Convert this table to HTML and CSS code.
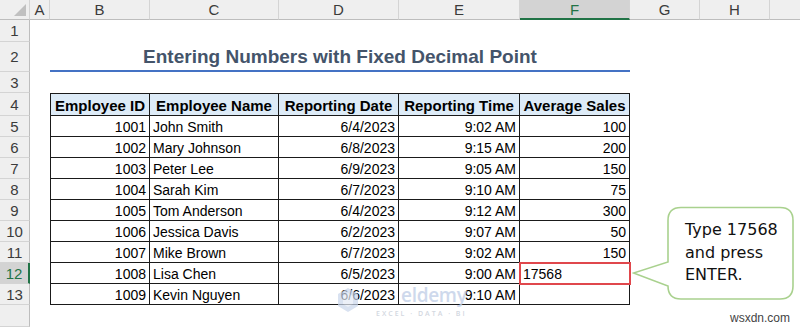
FILE: index.html
```html
<!DOCTYPE html>
<html>
<head>
<meta charset="utf-8">
<link rel="stylesheet" href="styles.css">
</head>
<body>
<div class="sheet">
  <div class="colhead corner"><span class="tri"></span></div>
  <div class="colhead">A</div>
  <div class="colhead">B</div>
  <div class="colhead">C</div>
  <div class="colhead">D</div>
  <div class="colhead">E</div>
  <div class="colhead selcol">F</div>
  <div class="colhead">G</div>
  <div class="colhead">H</div>
  <div class="colhead last"></div>

  <div class="rowhead">1</div><div class="blank span9"></div>

  <div class="rowhead">2</div><div class="blank"></div>
  <div class="title">Entering Numbers with Fixed Decimal Point</div>
  <div class="blank span3"></div>

  <div class="rowhead">3</div><div class="blank span9"></div>

  <div class="rowhead">4</div><div class="blank"></div>
  <div class="cell th first">Employee ID</div>
  <div class="cell th">Employee Name</div>
  <div class="cell th">Reporting Date</div>
  <div class="cell th">Reporting Time</div>
  <div class="cell th">Average Sales</div>
  <div class="blank span3"></div>

  <div class="rowhead">5</div><div class="blank"></div>
  <div class="cell first num">1001</div><div class="cell">John Smith</div><div class="cell num">6/4/2023</div><div class="cell num">9:02 AM</div><div class="cell num">100</div>
  <div class="blank span3"></div>

  <div class="rowhead">6</div><div class="blank"></div>
  <div class="cell first num">1002</div><div class="cell">Mary Johnson</div><div class="cell num">6/8/2023</div><div class="cell num">9:15 AM</div><div class="cell num">200</div>
  <div class="blank span3"></div>

  <div class="rowhead">7</div><div class="blank"></div>
  <div class="cell first num">1003</div><div class="cell">Peter Lee</div><div class="cell num">6/9/2023</div><div class="cell num">9:05 AM</div><div class="cell num">150</div>
  <div class="blank span3"></div>

  <div class="rowhead">8</div><div class="blank"></div>
  <div class="cell first num">1004</div><div class="cell">Sarah Kim</div><div class="cell num">6/7/2023</div><div class="cell num">9:10 AM</div><div class="cell num">75</div>
  <div class="blank span3"></div>

  <div class="rowhead">9</div><div class="blank"></div>
  <div class="cell first num">1005</div><div class="cell">Tom Anderson</div><div class="cell num">6/4/2023</div><div class="cell num">9:12 AM</div><div class="cell num">300</div>
  <div class="blank span3"></div>

  <div class="rowhead">10</div><div class="blank"></div>
  <div class="cell first num">1006</div><div class="cell">Jessica Davis</div><div class="cell num">6/2/2023</div><div class="cell num">9:07 AM</div><div class="cell num">50</div>
  <div class="blank span3"></div>

  <div class="rowhead">11</div><div class="blank"></div>
  <div class="cell first num">1007</div><div class="cell">Mike Brown</div><div class="cell num">6/7/2023</div><div class="cell num">9:02 AM</div><div class="cell num">150</div>
  <div class="blank span3"></div>

  <div class="rowhead selrow">12</div><div class="blank"></div>
  <div class="cell first num">1008</div><div class="cell">Lisa Chen</div><div class="cell num">6/5/2023</div><div class="cell num">9:00 AM</div><div class="cell active">17568</div>
  <div class="blank span3"></div>

  <div class="rowhead">13</div><div class="blank"></div>
  <div class="cell first num">1009</div><div class="cell">Kevin Nguyen</div><div class="cell num">6/6/2023</div><div class="cell num">9:10 AM</div><div class="cell num"></div>
  <div class="blank span3"></div>

  <div class="rowhead"></div><div class="blank span9"></div>

  <svg class="wm-hex" width="22" height="26" viewBox="0 0 22 26">
    <polygon points="11,1 21,7 21,19 11,25 1,19 1,7" fill="#c9d6ec"/>
    <polygon points="11,6 16,9 16,17 11,20 6,17 6,9" fill="#e4ebf6"/>
  </svg>
  <div class="wm-name">eldemy</div>
  <div class="wm-sub">EXCEL · DATA · BI</div>

  <div class="callout">
    <svg class="callout-shape" width="164" height="96" viewBox="0 0 164 96">
      <path d="M49 1.5 H148 Q161 1.5 161 14.5 V80 Q161 93 148 93 H49 Q36 93 36 80 L1.5 67 L36 56 V14.5 Q36 1.5 49 1.5 Z" fill="#ffffff" stroke="#a9d18e" stroke-width="1.6"/>
    </svg>
    <div class="callout-text">Type 17568<br>and press<br>ENTER.</div>
  </div>

  <div class="credit">wsxdn.com</div>
</div>
</body>
</html>
```

FILE: styles.css
```css
html, body {
  margin: 0;
  padding: 0;
  background: #ffffff;
}

.sheet {
  position: relative;
  width: 800px;
  height: 327px;
  overflow: hidden;
  display: grid;
  grid-template-columns: 30px 20px 100px 129px 120px 121px 110px 70px 70px 30px;
  grid-template-rows: 20px 22px 30px 21px 23px repeat(9, 21px) 22px;
  font-family: "Liberation Sans", Arial, sans-serif;
  font-size: 14px;
  color: #000;
}

.colhead {
  box-sizing: border-box;
  background: #efefef;
  border-right: 1px solid #d4d4d4;
  border-bottom: 1px solid #bdbdbd;
  display: flex;
  align-items: center;
  justify-content: center;
  font-size: 15px;
  color: #3b3b3b;
}

.colhead.corner {
  position: relative;
}

.tri {
  position: absolute;
  right: 3px;
  bottom: 3px;
  width: 0;
  height: 0;
  border-left: 12px solid transparent;
  border-bottom: 12px solid #c0c0c0;
}

.colhead.selcol {
  background: #d3d3d3;
  color: #217346;
  border-bottom: 2px solid #217346;
}

.colhead.last {
  border-right: none;
}

.rowhead {
  box-sizing: border-box;
  background: #efefef;
  border-right: 1px solid #bdbdbd;
  border-bottom: 1px solid #d4d4d4;
  display: flex;
  align-items: center;
  justify-content: center;
  font-size: 15px;
  color: #3b3b3b;
}

.rowhead.selrow {
  background: #d3d3d3;
  color: #217346;
  border-right: 2px solid #217346;
}

.blank {
  min-width: 0;
}

.span9 { grid-column: span 9; }
.span3 { grid-column: span 3; }

.title {
  grid-column: span 5;
  box-sizing: border-box;
  border-bottom: 2px solid #4472c4;
  display: flex;
  align-items: flex-end;
  justify-content: center;
  padding-bottom: 2px;
  font-weight: bold;
  font-size: 19px;
  color: #44546a;
  white-space: nowrap;
}

.cell {
  box-sizing: border-box;
  border-right: 1px solid #1a1a1a;
  border-bottom: 1px solid #1a1a1a;
  display: flex;
  align-items: center;
  padding: 1px 3px 0 3px;
  white-space: nowrap;
  overflow: visible;
  font-size: 14px;
}

.cell.first {
  border-left: 1px solid #1a1a1a;
}

.cell.th {
  background: #ddebf7;
  border-top: 1px solid #1a1a1a;
  font-weight: bold;
  justify-content: center;
  font-size: 15px;
  padding: 1px 2px 0 2px;
}

.cell.num {
  justify-content: flex-end;
}

.cell.active {
  position: relative;
  z-index: 1;
  outline: 2px solid #e0474c;
  outline-offset: -1px;
}

.wm-hex {
  position: absolute;
  left: 337px;
  top: 287px;
  opacity: 0.7;
  pointer-events: none;
}

.wm-name {
  position: absolute;
  left: 401px;
  top: 287px;
  font-family: "Open Sans", sans-serif;
  font-size: 19px;
  line-height: 17px;
  font-weight: 600;
  color: #c3d0e8;
  letter-spacing: -0.3px;
  opacity: 0.8;
  pointer-events: none;
}

.wm-sub {
  position: absolute;
  left: 376px;
  top: 310px;
  font-family: "Open Sans", sans-serif;
  font-size: 7px;
  line-height: 8px;
  font-weight: 600;
  letter-spacing: 2px;
  color: #d3d8df;
  pointer-events: none;
}

.callout {
  position: absolute;
  left: 632px;
  top: 206px;
  width: 164px;
  height: 96px;
  z-index: 2;
}

.callout-shape {
  position: absolute;
  left: 0;
  top: 0;
}

.callout-text {
  position: absolute;
  left: 53px;
  top: 13px;
  font-family: "DejaVu Sans", sans-serif;
  font-size: 16px;
  line-height: 22.5px;
  color: #111;
}

.credit {
  position: absolute;
  right: 10px;
  bottom: 2px;
  font-family: "Liberation Sans", Arial, sans-serif;
  font-size: 12px;
  color: #444;
}
```
